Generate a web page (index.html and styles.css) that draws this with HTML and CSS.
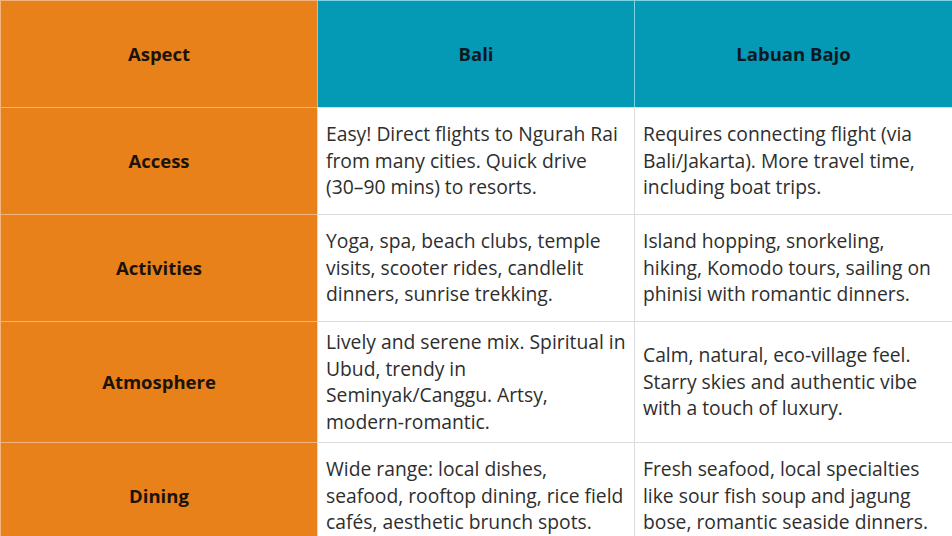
FILE: index.html
```html
<!DOCTYPE html>
<html lang="en">
<head>
<meta charset="utf-8">
<title>Bali vs Labuan Bajo</title>
<link rel="stylesheet" href="styles.css">
</head>
<body>
<div class="table">
  <div class="cell aspect">Aspect</div>
  <div class="cell top">Bali</div>
  <div class="cell top">Labuan Bajo</div>

  <div class="cell aspect">Access</div>
  <div class="cell body">Easy! Direct flights to Ngurah Rai from many cities. Quick drive (30–90 mins) to resorts.</div>
  <div class="cell body">Requires connecting flight (via Bali/Jakarta). More travel time, including boat trips.</div>

  <div class="cell aspect">Activities</div>
  <div class="cell body">Yoga, spa, beach clubs, temple visits, scooter rides, candlelit dinners, sunrise trekking.</div>
  <div class="cell body">Island hopping, snorkeling, hiking, Komodo tours, sailing on phinisi with romantic dinners.</div>

  <div class="cell aspect">Atmosphere</div>
  <div class="cell body">Lively and serene mix. Spiritual in Ubud, trendy in Seminyak/Canggu. Artsy, modern-romantic.</div>
  <div class="cell body">Calm, natural, eco-village feel. Starry skies and authentic vibe with a touch of luxury.</div>

  <div class="cell aspect">Dining</div>
  <div class="cell body">Wide range: local dishes, seafood, rooftop dining, rice field cafés, aesthetic brunch spots.</div>
  <div class="cell body">Fresh seafood, local specialties like sour fish soup and jagung bose, romantic seaside dinners.</div>
</div>
</body>
</html>
```

FILE: styles.css
```css
html, body {
  margin: 0;
  padding: 0;
  background: #ffffff;
}

body {
  font-family: "Open Sans", "Noto Sans", sans-serif;
  overflow: hidden;
}

.table {
  display: grid;
  grid-template-columns: 317px 317px 318px;
  grid-auto-rows: minmax(107px, auto);
  width: 952px;
}

.cell {
  box-sizing: border-box;
  display: flex;
  align-items: center;
  padding: 7px 8px;
  font-size: 19.3px;
  line-height: 26.5px;
  color: #2e2e2e;
}

.aspect {
  background: #e8811a;
  justify-content: center;
  text-align: center;
  font-weight: 700;
  font-size: 18.5px;
  color: #1b1209;
  border-top: 1px solid #f2b47a;
  border-left: 1px solid #f2b47a;
}

.top {
  background: #0499b5;
  justify-content: center;
  text-align: center;
  font-weight: 700;
  font-size: 18.5px;
  color: #0e1722;
  border-left: 1px solid #7dd4e4;
  border-top: 1px solid #7dd4e4;
}

.body {
  background: #ffffff;
  border-left: 1px solid #dcdcdc;
  border-top: 1px solid #dcdcdc;
}
```
